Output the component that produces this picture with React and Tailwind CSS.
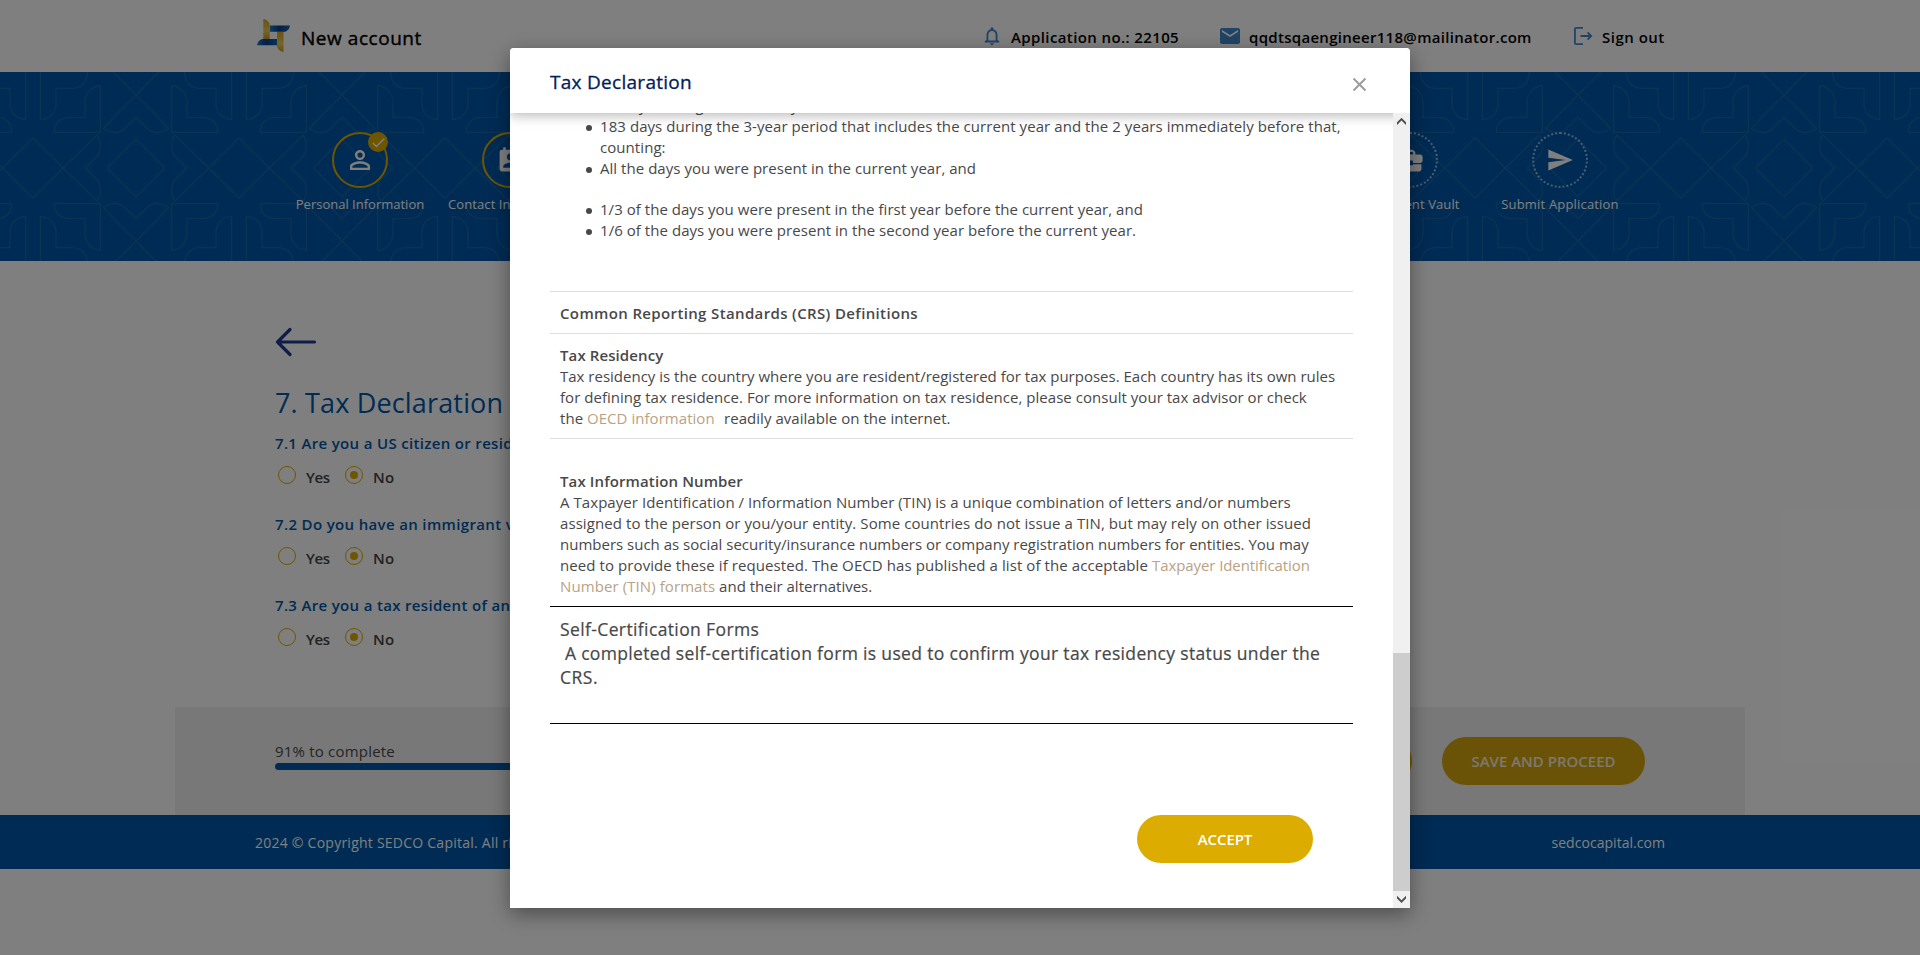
import {
  MdCheck,
  MdBusinessCenter,
  MdEmail,
  MdNotificationsNone,
  MdPermContactCalendar,
  MdPersonOutline,
  MdSend,
} from "react-icons/md";

const TILES = [-1, 0, 1, 2, 3, 4, 5, 6, 7, 8, 9];

function BannerPattern() {
  return (
    <svg
      className="absolute inset-0 h-full w-full"
      viewBox="0 36 5760 567"
      preserveAspectRatio="none"
      fill="none"
      stroke="#1766a8"
      strokeWidth="4"
      aria-hidden="true"
    >
      <defs>
        <g id="quarter">
          <path d="M99 233L190 324L290 226C299 232 301 240 301 255C301 275 298 283 290 290L256 324" />
          <path d="M408 238L322 324" />
          <path d="M340 36L408 105L310 205C325 219 355 223 373 207L408 172" />
          <path d="M301 217H163C163 190 180 172 210 172H255V130C255 100 275 78 301 78Z" />
          <path d="M121 36V178C148 178 168 160 168 130V85H215C242 85 262 68 262 36" />
        </g>
        <g id="half">
          <use href="#quarter" />
          <use href="#quarter" transform="translate(816 0) scale(-1 1)" />
        </g>
        <g id="tile">
          <use href="#half" />
          <use href="#half" transform="translate(0 648) scale(1 -1)" />
        </g>
      </defs>
      {TILES.map((n) => (
        <use key={n} href="#tile" x={n * 618} />
      ))}
    </svg>
  );
}

function Logo() {
  return (
    <svg width="33" height="33" viewBox="0 0 33 33" aria-hidden="true">
      <defs>
        <linearGradient id="goldA" x1="0" y1="0" x2="0" y2="1">
          <stop offset="0" stopColor="#d9a520" />
          <stop offset="0.6" stopColor="#ecca58" />
          <stop offset="1" stopColor="#c79a1c" />
        </linearGradient>
        <linearGradient id="blueA" x1="0" y1="0" x2="1" y2="0">
          <stop offset="0" stopColor="#1b7dc4" />
          <stop offset="0.45" stopColor="#0a3f8c" />
          <stop offset="1" stopColor="#1465ae" />
        </linearGradient>
      </defs>
      <path d="M6.3 0C10 .6 12.7 3 12.7 6.5V20H6.3Z" fill="url(#goldA)" />
      <path d="M26.5 33C22.8 32.4 20 30 20 26.5V12.8H26.5Z" fill="url(#goldA)" />
      <path d="M12.9 6.4H33C32.4 10.1 30 12.8 26.5 12.8H12.9Z" fill="url(#blueA)" />
      <path d="M20 26.3H0C.6 22.6 3 20 6.5 20H20Z" fill="url(#blueA)" />
    </svg>
  );
}

function SignOutIcon() {
  return (
    <svg width="19" height="18" viewBox="0 0 19 18" fill="none" stroke="#4189cc" strokeWidth="1.8" aria-hidden="true">
      <path d="M9 .9H2.2Q.9 .9 .9 2.2V15.8Q.9 17.1 2.2 17.1H9" />
      <path d="M6.5 9H17M13.6 5.4L17.2 9L13.6 12.6" />
    </svg>
  );
}

function Step({ label, icon, done, tracking }) {
  return (
    <div className="flex w-[150px] flex-col items-center">
      <div
        className={
          done
            ? "relative flex h-14 w-14 items-center justify-center rounded-full border-2 border-[#dcac00] text-white"
            : "relative flex h-14 w-14 items-center justify-center rounded-full border-2 border-dotted border-white/60 text-white"
        }
      >
        {icon}
        {done && (
          <span className="absolute -top-0.5 -right-0.5 flex h-5 w-5 items-center justify-center rounded-full bg-[#dcac00]">
            <MdCheck size={17} />
          </span>
        )}
      </div>
      <span className={`mt-[7px] whitespace-nowrap text-[13px] leading-[18px] text-white ${tracking}`}>{label}</span>
    </div>
  );
}

function Question({ text, tracking }) {
  return (
    <div className="h-[81px]">
      <div className={`text-[15px] leading-[21px] font-semibold whitespace-nowrap text-[#0057a8] ${tracking}`}>{text}</div>
      <div className="mt-3 flex pl-[3px] text-[15px] leading-[20px] font-semibold text-[#444]">
        <span className="h-[18px] w-[18px] rounded-full border border-[#dcac00]" />
        <span className="mt-[1px] ml-[10px] w-[39px] tracking-[-0.4px]">Yes</span>
        <span className="flex h-[18px] w-[18px] items-center justify-center rounded-full border border-[#dcac00]">
          <span className="h-2 w-2 rounded-full bg-[#dcac00]" />
        </span>
        <span className="mt-[1px] ml-[10px] tracking-[0.3px]">No</span>
      </div>
    </div>
  );
}

function Page() {
  return (
    <div className="h-[955px] overflow-hidden bg-white">
      <header className="flex h-[72px] items-start pl-[257px]">
        <div className="mt-[19px]">
          <Logo />
        </div>
        <span className="mt-[25px] ml-[11px] w-[680px] text-[19px] leading-[26px] tracking-[0.54px] text-black [-webkit-text-stroke:0.4px]">
          New account
        </span>
        <div className="mt-[27px] flex items-start text-[15px] leading-[21px] font-semibold text-black">
          <MdNotificationsNone size={22} className="-mt-[2px] text-[#4189cc]" />
          <span className="ml-2 w-[207px] whitespace-nowrap tracking-[0.39px]">Application no.: 22105</span>
          <MdEmail size={24} className="-mt-[3px] text-[#4189cc]" />
          <span className="ml-[7px] w-[325px] whitespace-nowrap tracking-[0.3px]">qqdtsqaengineer118@mailinator.com</span>
          <SignOutIcon />
          <span className="ml-[9px] whitespace-nowrap tracking-[0.5px]">Sign out</span>
        </div>
      </header>

      <section className="relative h-[189px] bg-[#0057a8]">
        <BannerPattern />
        <div className="relative flex justify-center pt-[60px]">
          <Step done label="Personal Information" icon={<MdPersonOutline size={30} />} tracking="tracking-normal" />
          <Step done label="Contact Information" icon={<MdPermContactCalendar size={29} />} tracking="tracking-[0.1px]" />
          <div className="w-[750px]" />
          <Step label="Document Vault" icon={<MdBusinessCenter size={29} />} tracking="tracking-[0.1px]" />
          <Step label="Submit Application" icon={<MdSend size={28} />} tracking="tracking-[0.18px]" />
        </div>
      </section>

      <main className="h-[446px] pt-[66px] pl-[275px]">
        <svg width="42" height="30" viewBox="0 0 42 30" fill="none" stroke="#1f3a92" strokeWidth="3.2" strokeLinecap="round" strokeLinejoin="round" aria-hidden="true">
          <path d="M39.5 15H2.5M15 2.5L2.5 15L15 27.5" />
        </svg>
        <h1 className="mt-[28px] text-[27px] leading-[36px] tracking-[0.16px] text-[#0057a8]">7. Tax Declaration</h1>
        <div className="mt-[12px]">
          <Question text="7.1 Are you a US citizen or resident?" tracking="tracking-[0.33px]" />
          <Question text="7.2 Do you have an immigrant visa?" tracking="tracking-[0.35px]" />
          <Question text="7.3 Are you a tax resident of any" tracking="tracking-[0.33px]" />
        </div>
      </main>

      <div className="mx-auto flex h-[108px] w-[1570px] justify-between bg-[#f0f0f0] pr-[100px] pl-[100px]">
        <div className="pt-[34px]">
          <div className="text-[15px] leading-[20px] tracking-[0.2px] text-[#4a4a4a]">91% to complete</div>
          <div className="mt-[2px] h-[7px] w-[620px] rounded-full bg-[#0057a8]" />
        </div>
        <div className="flex items-start pt-[30px]">
          <div className="mr-[30px] h-12 w-[170px] rounded-full border-2 border-[#dcac00]" />
          <div className="flex h-12 w-[203px] items-center justify-center rounded-full bg-[#d5a50e] text-[15px] font-semibold whitespace-nowrap text-white/85">
            SAVE AND PROCEED
          </div>
        </div>
      </div>

      <footer className="flex h-[54px] items-center justify-between bg-[#0057a8] pr-[255px] pl-[255px] text-[14px] text-white">
        <span className="tracking-[0.24px]">2024 © Copyright SEDCO Capital. All rights</span>
        <span className="tracking-[0.04px]">sedcocapital.com</span>
      </footer>
    </div>
  );
}

function Line({ children, className = "" }) {
  return <div className={`whitespace-pre ${className}`}>{children}</div>;
}

function Bullet({ children, className = "" }) {
  return (
    <li className="flex">
      <span className="mt-[9px] mr-2 ml-[35px] h-[6px] w-[6px] shrink-0 rounded-full bg-[#484848]" />
      <div className={`whitespace-pre ${className}`}>{children}</div>
    </li>
  );
}

function Chevron({ down }) {
  return (
    <svg width="17" height="17" viewBox="0 0 17 17" fill="#505050" aria-hidden="true">
      {down ? (
        <path d="M8.5 12L4 7.5V4.7L8.5 9.2L13 4.7V7.5Z" />
      ) : (
        <path d="M8.5 4.8L13 9.3V12.1L8.5 7.6L4 12.1V9.3Z" />
      )}
    </svg>
  );
}

function Dialog() {
  return (
    <div className="flex h-[860px] w-[900px] flex-col overflow-hidden rounded-t-[4px] bg-white">
      <div className="relative z-10 flex h-[65px] shrink-0 justify-between bg-white pr-[43px] pl-10 shadow-[0_2px_12px_rgba(0,0,0,0.3)]">
        <h2 className="mt-[21px] text-[19px] leading-[26px] tracking-[0.28px] text-[#00205c] [-webkit-text-stroke:0.3px]">Tax Declaration</h2>
        <svg className="mt-[29px]" width="15" height="15" viewBox="0 0 15 15" stroke="#9b9b9b" strokeWidth="1.9" aria-hidden="true">
          <path d="M1.5 1.5L13.5 13.5M13.5 1.5L1.5 13.5" />
        </svg>
      </div>

      <div className="relative flex h-[795px]">
        <div className="-mt-[18px] w-[883px] pr-10 pl-10 text-[15px] leading-[21px] text-[#484848]">
          <ul className="-ml-[3px] pl-[4px]">
            <Bullet className="tracking-[0.06px]">31 days during the current year, and</Bullet>
            <Bullet className="tracking-[0.065px]">
              183 days during the 3-year period that includes the current year and the 2 years immediately before that,{"\n"}counting:
            </Bullet>
            <Bullet className="tracking-[0.04px]">All the days you were present in the current year, and</Bullet>
          </ul>
          <ul className="mt-5 -ml-[3px] pl-[4px]">
            <Bullet className="tracking-[0.035px]">1/3 of the days you were present in the first year before the current year, and</Bullet>
            <Bullet className="tracking-[0.05px]">1/6 of the days you were present in the second year before the current year.</Bullet>
          </ul>

          <div className="mt-[50px] h-[42px] border-t border-[#dedede] px-2.5 pt-[11px] font-semibold">
            <Line className="tracking-[0.36px]">Common Reporting Standards (CRS) Definitions</Line>
          </div>

          <div className="h-[105px] border-t border-[#dedede] px-2.5 pt-[11px]">
            <Line className="font-semibold tracking-[0.1px]">Tax Residency</Line>
            <Line>Tax residency is the country where you are resident/registered for tax purposes. Each country has its own rules</Line>
            <Line className="tracking-[0.035px]">for defining tax residence. For more information on tax residence, please consult your tax advisor or check</Line>
            <Line className="tracking-[0.04px]">
              the <span className="mr-[1.5px] text-[#b9a284]">OECD information</span>{"  "}readily available on the internet.
            </Line>
          </div>

          <div className="h-[168px] border-t border-[#dedede] px-2.5 pt-8">
            <Line className="font-semibold tracking-[0.12px]">Tax Information Number</Line>
            <Line className="tracking-[0.06px]">A Taxpayer Identification / Information Number (TIN) is a unique combination of letters and/or numbers</Line>
            <Line className="tracking-[0.08px]">assigned to the person or you/your entity. Some countries do not issue a TIN, but may rely on other issued</Line>
            <Line>numbers such as social security/insurance numbers or company registration numbers for entities. You may</Line>
            <Line className="tracking-[0.085px]">
              need to provide these if requested. The OECD has published a list of the acceptable{" "}
              <span className="tracking-[-0.08px] text-[#b9a284]">Taxpayer Identification</span>
            </Line>
            <Line>
              <span className="tracking-[0.09px] text-[#b9a284]">Number (TIN) formats</span> and their alternatives.
            </Line>
          </div>

          <div className="h-[118px] border-t border-b border-black px-2.5 pt-[10px] text-[17.5px] leading-[24px] [-webkit-text-stroke:0.2px]">
            <Line className="tracking-[0.38px]">Self-Certification Forms</Line>
            <Line className="tracking-[0.33px]"> A completed self-certification form is used to confirm your tax residency status under the</Line>
            <Line className="tracking-[0.5px]">CRS.</Line>
          </div>

          <div className="flex justify-end pt-[91px] pr-10">
            <div className="flex h-12 w-44 items-center justify-center rounded-full bg-[#dcac00] text-[15px] font-semibold tracking-[-0.1px] text-white">
              ACCEPT
            </div>
          </div>
        </div>

        <div className="relative z-20 flex h-[795px] w-[17px] flex-col justify-between bg-[#f0f0f0]">
          <Chevron />
          <div className="mt-auto h-[238px] w-full bg-[#cdcdcd]" />
          <Chevron down />
        </div>
      </div>
    </div>
  );
}

export default function App() {
  return (
    <div className="relative h-[955px] overflow-hidden font-['Open_Sans','Noto_Sans',sans-serif]">
      <Page />
      <div className="absolute inset-0 flex items-start justify-center bg-black/50 pt-12">
        <div className="rounded-t-[4px] shadow-[0_6px_20px_rgba(0,0,0,0.4)]">
          <Dialog />
        </div>
      </div>
    </div>
  );
}
